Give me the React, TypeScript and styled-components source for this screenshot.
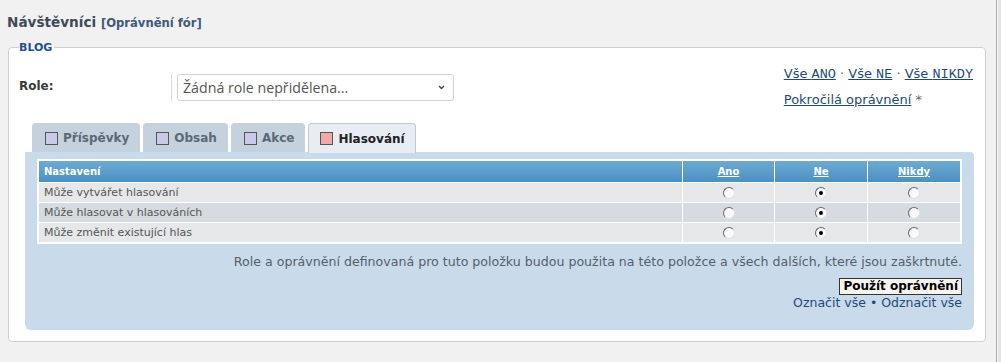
import { useState } from 'react';
import styled, { createGlobalStyle } from 'styled-components';

const Global = createGlobalStyle`
  html, body {
    margin: 0;
    padding: 0;
    background: #f1f1f1;
    font-family: "DejaVu Sans", Verdana, sans-serif;
  }
`;

const Screen = styled.div`
  display: flex;
  height: 362px;
  overflow: hidden;
`;

const Main = styled.div`
  flex: 1;
  padding: 11px 10px 0 8px;
`;

const Edge = styled.div`
  width: 4px;
  background: #e4e4e4;
  border-left: 1px solid #a8a8a8;
  box-shadow: inset 1px 0 0 #fafafa;
`;

const Title = styled.h1`
  margin: 0 0 0 -1px;
  font-size: 13.6px;
  font-weight: bold;
  color: #3d4b59;
  line-height: 22px;

  small {
    font-size: 11.6px;
    color: #3f5a7d;
  }
`;

const Box = styled.fieldset`
  margin: 7px 0 0;
  padding: 12px 10px 12px 10px;
  background: #fff;
  border: 1px solid #cfcfcf;
  border-radius: 4px;
  box-sizing: border-box;
  height: 301px;
`;

const Legend = styled.legend`
  padding: 0 2px 0 0;
  font-size: 11px;
  font-weight: bold;
  color: #1f4f8e;
`;

const TopRow = styled.div`
  display: flex;
  justify-content: space-between;
  align-items: flex-start;
  height: 57px;
`;

const RoleRow = styled.div`
  display: flex;
  align-items: center;
  margin-top: 8px;
`;

const RoleLabel = styled.label`
  width: 152px;
  padding-bottom: 4px;
  font-size: 12px;
  font-weight: bold;
  color: #3a3a3a;
`;

const RoleField = styled.div`
  border-left: 1px solid #d6d6d6;
  padding-left: 5px;
`;

const Select = styled.div`
  width: 262px;
  height: 25px;
  padding: 0 8px 0 5px;
  display: flex;
  align-items: center;
  justify-content: space-between;
  border: 1px solid #d3d3d3;
  border-radius: 3px;
  font-family: "Open Sans", sans-serif;
  font-size: 14.2px;
  color: #555;
`;

const Links = styled.div`
  display: flex;
  flex-direction: column;
  gap: 10px;
  margin-right: 2px;
  font-size: 13px;
  color: #666;
`;

const Link = styled.a`
  color: #1e4a78;
  text-decoration: underline;
  cursor: pointer;
`;

const Mono = styled.span`
  font-family: "Liberation Mono", "Courier New", monospace;
  font-size: 13.5px;
`;

const Tabs = styled.div`
  display: flex;
  gap: 3px;
  margin: 0 0 0 13px;
`;

const Tab = styled.div<{ $active?: boolean }>`
  display: flex;
  align-items: center;
  gap: 5px;
  height: ${p => (p.$active ? 30 : 29)}px;
  margin-bottom: ${p => (p.$active ? -1 : 0)}px;
  padding: 0 10px 0 ${p => (p.$active ? 11 : 12)}px;
  box-sizing: border-box;
  border-radius: 4px 4px 0 0;
  background: ${p => (p.$active ? '#e8edf3' : '#c5d1dd')};
  border: 1px solid ${p => (p.$active ? '#bccbda' : '#c5d1dd')};
  border-bottom: none;
  font-size: 12px;
  font-weight: bold;
  color: ${p => (p.$active ? '#222' : '#5b6877')};
`;

const Swatch = styled.span<{ $active?: boolean }>`
  width: 11px;
  height: 11px;
  border: 1px solid #555;
  background: ${p => (p.$active ? '#f2a9a9' : '#c9c9ea')};
`;

const Panel = styled.div`
  margin-left: 6px;
  margin-right: 1px;
  padding: 7px 12px 0 12px;
  height: 178px;
  box-sizing: border-box;
  background: #c9dbeb;
  border-radius: 0 4px 6px 6px;
`;

const Table = styled.table`
  width: 100%;
  border-collapse: collapse;
  border: 2px solid #fff;
  font-size: 11px;
`;

const Th = styled.th<{ $w?: number; $left?: boolean }>`
  height: 21px;
  padding: 0 5px;
  width: ${p => (p.$w ? `${p.$w}px` : 'auto')};
  text-align: ${p => (p.$left ? 'left' : 'center')};
  font-size: 10px;
  color: #fff;
  background: linear-gradient(#6eaad2, #4a90c2);
  border-left: 1px solid #fff;

  a {
    color: #fff;
    text-decoration: underline;
  }
`;

const Tr = styled.tr<{ $alt?: boolean }>`
  background: ${p => (p.$alt ? '#d6dbe1' : '#e5e7e9')};
`;

const Td = styled.td<{ $center?: boolean }>`
  height: 19px;
  padding: 0 5px;
  color: #555;
  border-top: 1px solid #fff;
  border-left: 1px solid #fff;
  text-align: ${p => (p.$center ? 'center' : 'left')};
`;

const Radio = styled.span<{ $on?: boolean }>`
  display: inline-block;
  position: relative;
  width: 10px;
  height: 10px;
  border-radius: 50%;
  vertical-align: middle;
  background: #fafafa;
  border: 1px solid;
  border-color: #666 #e0e0e0 #e0e0e0 #666;

  &::after {
    content: '';
    display: ${p => (p.$on ? 'block' : 'none')};
    position: absolute;
    left: 3px;
    top: 3px;
    width: 4px;
    height: 4px;
    border-radius: 50%;
    background: #000;
  }
`;

const Note = styled.p`
  margin: 10px 0 0;
  text-align: right;
  font-size: 12.6px;
  color: #555f6b;
`;

const Actions = styled.div`
  display: flex;
  flex-direction: column;
  align-items: flex-end;
  gap: 0;
  margin-top: 9px;
  font-size: 12.5px;
  color: #1e4a78;
`;

const Button = styled.button`
  padding: 0 3px;
  height: 17px;
  font-family: "DejaVu Sans", Verdana, sans-serif;
  font-size: 12px;
  font-weight: bold;
  color: #000;
  background: #f6f4ee;
  border: 1px solid #333;
  border-radius: 0;
  line-height: 15px;
`;

const PlainLink = styled.a`
  color: #1e4a78;
  text-decoration: none;
  cursor: pointer;
`;

const rows = [
  'Může vytvářet hlasování',
  'Může hlasovat v hlasováních',
  'Může změnit existující hlas',
];

const tabs = ['Příspěvky', 'Obsah', 'Akce', 'Hlasování'];

const App = () => {
  const [values, setValues] = useState(rows.map(() => 1));

  return (
    <Screen>
      <Global />
      <Main>
        <Title>
          Návštěvníci <small>[Oprávnění fór]</small>
        </Title>
        <Box>
          <Legend>BLOG</Legend>
          <TopRow>
            <RoleRow>
              <RoleLabel>Role:</RoleLabel>
              <RoleField>
                <Select>
                  Žádná role nepřidělena...
                  <svg width="7" height="5" viewBox="0 0 7 5">
                    <path d="M1 1l2.5 2.5L6 1" stroke="#444" strokeWidth="1.4" fill="none" />
                  </svg>
                </Select>
              </RoleField>
            </RoleRow>
            <Links>
              <span>
                <Link>Vše <Mono>ANO</Mono></Link> · <Link>Vše <Mono>NE</Mono></Link> ·{' '}
                <Link>Vše <Mono>NIKDY</Mono></Link>
              </span>
              <span>
                <Link>Pokročilá oprávnění</Link> *
              </span>
            </Links>
          </TopRow>

          <Tabs>
            {tabs.map((t, i) => (
              <Tab key={t} $active={i === 3}>
                <Swatch $active={i === 3} />
                {t}
              </Tab>
            ))}
          </Tabs>

          <Panel>
            <Table>
              <thead>
                <tr>
                  <Th $left>Nastavení</Th>
                  <Th $w={81}><a>Ano</a></Th>
                  <Th $w={82}><a>Ne</a></Th>
                  <Th $w={82}><a>Nikdy</a></Th>
                </tr>
              </thead>
              <tbody>
                {rows.map((r, i) => (
                  <Tr key={r} $alt={i === 1}>
                    <Td>{r}</Td>
                    {[0, 1, 2].map(c => (
                      <Td $center key={c}>
                        <Radio
                          $on={values[i] === c}
                          onClick={() => setValues(v => v.map((x, j) => (j === i ? c : x)))}
                        />
                      </Td>
                    ))}
                  </Tr>
                ))}
              </tbody>
            </Table>
            <Note>
              Role a oprávnění definovaná pro tuto položku budou použita na této položce a všech dalších, které jsou zaškrtnuté.
            </Note>
            <Actions>
              <Button>Použít oprávnění</Button>
              <span>
                <PlainLink>Označit vše</PlainLink> • <PlainLink>Odznačit vše</PlainLink>
              </span>
            </Actions>
          </Panel>
        </Box>
      </Main>
      <Edge />
    </Screen>
  );
};

export default App;
